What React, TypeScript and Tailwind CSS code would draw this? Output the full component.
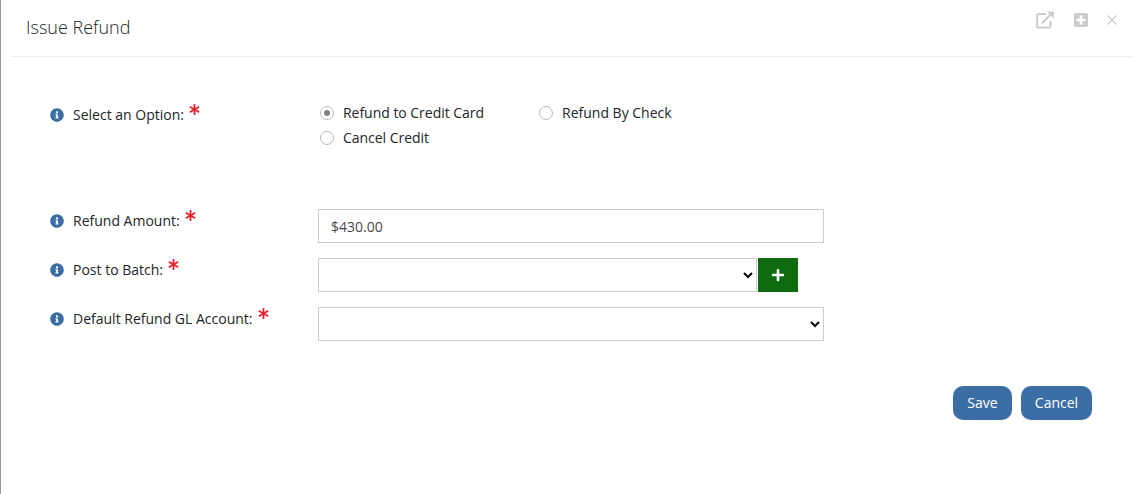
import { FaAsterisk, FaInfoCircle, FaPlus, FaPlusSquare } from "react-icons/fa";

function Label({ text, className = "" }: { text: string; className?: string }) {
  return (
    <div className={`w-[268px] shrink-0 flex items-center h-[23px] ${className}`}>
      <FaInfoCircle className="text-[#3a6ea5] text-[14px] shrink-0" />
      <span className="ml-[9px] text-[14px] text-[#212529]">{text}</span>
      <FaAsterisk className="ml-[5px] -mt-[10px] text-[11px] text-[#e8202a] shrink-0" />
    </div>
  );
}

function Radio({ label, checked, width, textClass = "tracking-[-0.03px]" }: { label: string; checked?: boolean; width: string; textClass?: string }) {
  return (
    <label className={`flex items-center h-[25px] ${width}`}>
      <span className="ml-[2px] w-[14px] h-[14px] rounded-full border border-[#bbbbbb] flex items-center justify-center shrink-0">
        {checked && <span className="w-[6px] h-[6px] rounded-full bg-[#808080]" />}
      </span>
      <span className={`ml-[9px] text-[14px] text-[#212529] ${textClass}`}>{label}</span>
    </label>
  );
}

export default function App() {
  return (
    <div className="w-[1140px] h-[494px] overflow-hidden bg-white border-l border-[#999999] font-['Open_Sans',sans-serif]">
      <div className="ml-[10px] w-[1121px] h-[57px] border-b border-[#eeeeee] flex items-start justify-between pl-[15px] pr-[14px]">
        <h1 className="mt-[15px] text-[18px] leading-[25px] font-light text-[#212529]">Issue Refund</h1>
        <div className="flex items-center mt-[11px] text-[#cccccc]">
          <svg width="18" height="18" viewBox="0 0 18 18" fill="none">
            <path d="M10 3H2.2a1 1 0 0 0-1 1v11.6a1 1 0 0 0 1 1h11.4a1 1 0 0 0 1-1V10" stroke="#cccccc" strokeWidth="2" />
            <path d="M6 12.2 15 3.2" stroke="#cccccc" strokeWidth="2.2" />
            <path d="M10.8 0.5H18V7.7Z" fill="#cccccc" />
          </svg>
          <FaPlusSquare className="text-[16px] ml-[19px] -mt-[1px]" />
          <svg className="ml-[17px] -mt-[1px]" width="12" height="12" viewBox="0 0 12 12" fill="none">
            <path d="M1.5 1.5 10.5 10.5M10.5 1.5 1.5 10.5" stroke="#cccccc" strokeWidth="1.2" />
          </svg>
        </div>
      </div>

      <div className="pl-[49px] pt-[39px]">
        <div className="flex h-[78px]">
          <Label text="Select an Option:" className="mt-[7px]" />
          <div className="pt-[4px]">
            <div className="flex">
              <Radio label="Refund to Credit Card" checked width="w-[219px]" />
              <Radio label="Refund By Check" width="w-[200px]" textClass="" />
            </div>
            <Radio label="Cancel Credit" width="w-[219px]" />
          </div>
        </div>

        <div className="mt-[35px] flex flex-col gap-[15px]">
          <div className="flex">
            <Label text="Refund Amount:" />
            <input
              readOnly
              value="$430.00"
              className="w-[506px] h-[34px] border border-[#cccccc] px-[12px] text-[14px] text-[#4a4a4a] outline-none"
            />
          </div>
          <div className="flex">
            <Label text="Post to Batch:" />
            <select className="w-[439px] h-[34px] border border-[#cccccc] bg-white text-[14px]" />
            <button className="ml-[1px] w-[40px] h-[34px] bg-[#0f6b0f] text-white flex items-center justify-center">
              <FaPlus className="text-[14px]" />
            </button>
          </div>
          <div className="flex">
            <Label text="Default Refund GL Account:" />
            <select className="w-[506px] h-[34px] border border-[#cccccc] bg-white text-[14px]" />
          </div>
        </div>

        <div className="mt-[45px] w-[1042px] flex justify-end gap-[9px]">
          <button className="w-[59px] h-[34px] pb-[2px] rounded-[10px] bg-[#3a6ea5] text-white text-[14px]">Save</button>
          <button className="w-[71px] h-[34px] pb-[2px] rounded-[10px] bg-[#3a6ea5] text-white text-[14px]">Cancel</button>
        </div>
      </div>
    </div>
  );
}
